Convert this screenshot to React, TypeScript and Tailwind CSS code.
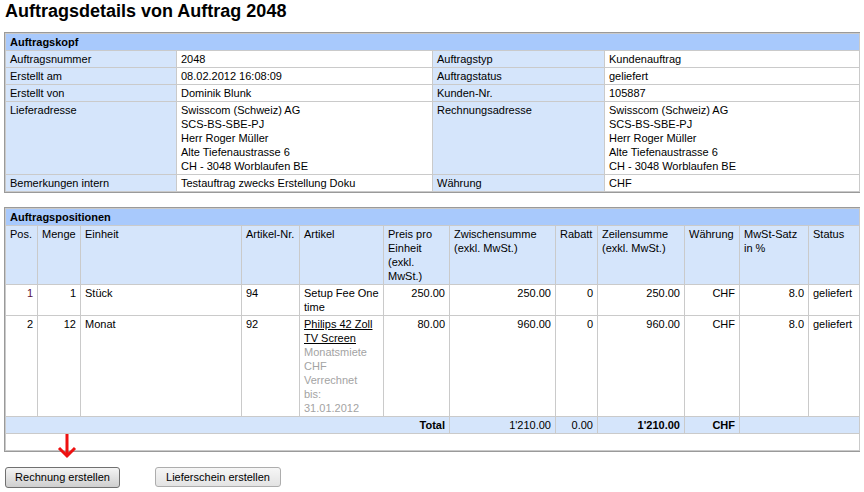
import React from "react";

const font = { fontFamily: '"Liberation Sans", Arial, sans-serif' };

const headRows: [string, React.ReactNode, string, React.ReactNode][] = [
  ["Auftragsnummer", "2048", "Auftragstyp", "Kundenauftrag"],
  ["Erstellt am", "08.02.2012 16:08:09", "Auftragstatus", "geliefert"],
  ["Erstellt von", "Dominik Blunk", "Kunden-Nr.", "105887"],
];

const address = [
  "Swisscom (Schweiz) AG",
  "SCS-BS-SBE-PJ",
  "Herr Roger Müller",
  "Alte Tiefenaustrasse 6",
  "CH - 3048 Worblaufen BE",
];

const td = "border border-[#cacaca] px-[4px] py-[1px] align-top leading-[14px]";
const label = td + " bg-[#d5e5fb]";
const val = td + " bg-white";

function Address() {
  return (
    <>
      {address.map((l) => (
        <div key={l}>{l}</div>
      ))}
    </>
  );
}

const cols = [32, 43, 161, 58, 84, 66, 106, 42, 87, 55, 69, 51];

export default function App() {
  return (
    <div className="relative w-[864px] h-[492px] bg-white text-[11px] text-black" style={font}>
      <div className="px-[5px]">
        <h1 className="text-[18px] font-bold leading-[22px]">Auftragsdetails von Auftrag 2048</h1>
      </div>

      <div className="ml-[4px] mt-[10px] w-[856px] border border-[#9a9a9a]">
        <table className="w-full table-fixed border-collapse">
          <colgroup>
            <col className="w-[171px]" />
            <col className="w-[256px]" />
            <col className="w-[172px]" />
            <col className="w-[255px]" />
          </colgroup>
          <tbody>
            <tr>
              <td colSpan={4} className={td + " bg-[#a8c9fc] font-bold"}>
                Auftragskopf
              </td>
            </tr>
            {headRows.map((r) => (
              <tr key={r[0]}>
                <td className={label}>{r[0]}</td>
                <td className={val}>{r[1]}</td>
                <td className={label}>{r[2]}</td>
                <td className={val}>{r[3]}</td>
              </tr>
            ))}
            <tr>
              <td className={label}>Lieferadresse</td>
              <td className={val}>
                <Address />
              </td>
              <td className={label}>Rechnungsadresse</td>
              <td className={val}>
                <Address />
              </td>
            </tr>
            <tr>
              <td className={label}>Bemerkungen intern</td>
              <td className={val}>Testauftrag zwecks Erstellung Doku</td>
              <td className={label}>Währung</td>
              <td className={val}>CHF</td>
            </tr>
          </tbody>
        </table>
      </div>

      <div className="ml-[4px] mt-[14px] w-[856px] border border-[#9a9a9a]">
        <table className="w-full table-fixed border-collapse">
          <colgroup>
            {cols.map((w, i) => (
              <col key={i} style={{ width: w }} />
            ))}
          </colgroup>
          <tbody>
            <tr>
              <td colSpan={12} className={td + " bg-[#a8c9fc] font-bold"}>
                Auftragspositionen
              </td>
            </tr>
            <tr className="h-[59px]">
              {[
                "Pos.",
                "Menge",
                "Einheit",
                "Artikel-Nr.",
                "Artikel",
                "Preis pro Einheit (exkl. MwSt.)",
                "Zwischensumme (exkl. MwSt.)",
                "Rabatt",
                "Zeilensumme (exkl. MwSt.)",
                "Währung",
                "MwSt-Satz in %",
                "Status",
              ].map((h) => (
                <td key={h} className={label + " whitespace-normal"}>
                  {h}
                </td>
              ))}
            </tr>
            <tr>
              <td className={val + " text-right text-[#5a1040]"}>1</td>
              <td className={val + " text-right"}>1</td>
              <td className={val}>Stück</td>
              <td className={val}>94</td>
              <td className={val}>Setup Fee One time</td>
              <td className={val + " text-right"}>250.00</td>
              <td className={val + " text-right"}>250.00</td>
              <td className={val + " text-right"}>0</td>
              <td className={val + " text-right"}>250.00</td>
              <td className={val + " text-right"}>CHF</td>
              <td className={val + " text-right"}>8.0</td>
              <td className={val}>geliefert</td>
            </tr>
            <tr>
              <td className={val + " text-right"}>2</td>
              <td className={val + " text-right"}>12</td>
              <td className={val}>Monat</td>
              <td className={val}>92</td>
              <td className={val}>
                <span className="underline">Philips 42 Zoll TV Screen</span>
                <div className="text-[#a3a3a3]">
                  Monatsmiete
                  <br />
                  CHF
                  <br />
                  Verrechnet
                  <br />
                  bis:
                  <br />
                  31.01.2012
                </div>
              </td>
              <td className={val + " text-right"}>80.00</td>
              <td className={val + " text-right"}>960.00</td>
              <td className={val + " text-right"}>0</td>
              <td className={val + " text-right"}>960.00</td>
              <td className={val + " text-right"}>CHF</td>
              <td className={val + " text-right"}>8.0</td>
              <td className={val}>geliefert</td>
            </tr>
            <tr>
              <td colSpan={6} className={label + " text-right font-bold"}>
                Total
              </td>
              <td className={label + " text-right"}>1'210.00</td>
              <td className={label + " text-right"}>0.00</td>
              <td className={label + " text-right font-bold"}>1'210.00</td>
              <td className={label + " text-right font-bold"}>CHF</td>
              <td colSpan={2} className={label}></td>
            </tr>
            <tr>
              <td colSpan={12} className={val + " h-[17px]"}></td>
            </tr>
          </tbody>
        </table>
      </div>

      <div className="mt-[15px] ml-[5px] flex gap-[35px]">
        <button className="h-[21px] w-[115px] rounded-[3px] border border-[#707070] bg-gradient-to-b from-[#f4f4f4] to-[#cfcfcf] text-[11px] leading-[19px]">
          Rechnung erstellen
        </button>
        <button className="h-[20px] w-[126px] rounded-[3px] border border-[#adadad] bg-gradient-to-b from-[#f6f6f6] to-[#e3e3e3] text-[11px] leading-[18px]">
          Lieferschein erstellen
        </button>
      </div>

      <svg className="absolute left-[57px] top-[433px]" width="20" height="26" viewBox="0 0 20 26">
        <path d="M10 1 V23 M2 15 L10 23 L18 15" fill="none" stroke="#ee1111" strokeWidth="3" />
      </svg>
    </div>
  );
}
